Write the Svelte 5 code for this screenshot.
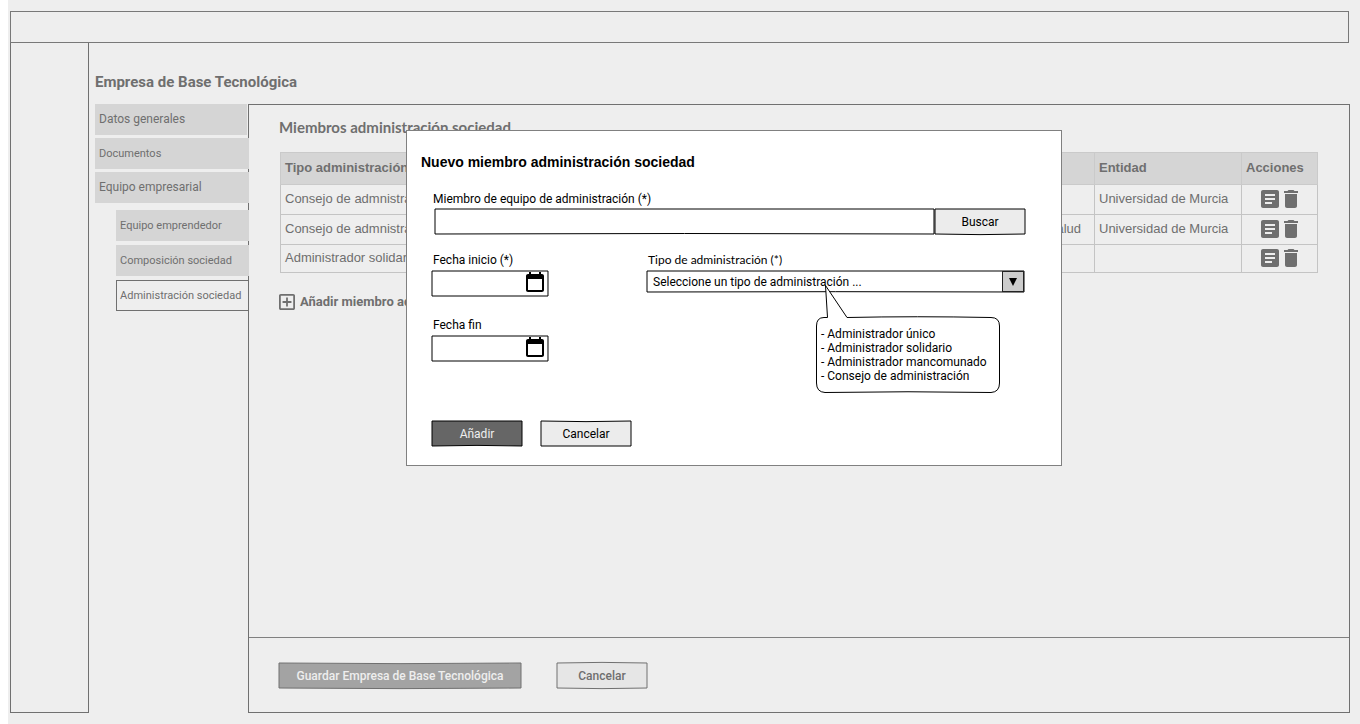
<script>
  const tabs = [
    { label: 'Datos generales', large: true, short: true },
    { label: 'Documentos' },
    { label: 'Equipo empresarial', large: true }
  ];
  const subtabs = [
    { label: 'Equipo emprendedor' },
    { label: 'Composición sociedad' },
    { label: 'Administración sociedad', active: true }
  ];
  const rows = [
    { type: 'Consejo de admnistración', area: '', entity: 'Universidad de Murcia' },
    { type: 'Consejo de admnistración', area: 'Salud', entity: 'Universidad de Murcia' },
    { type: 'Administrador solidario', area: '', entity: '' }
  ];
  const dates = [
    { id: 'start', label: 'Fecha inicio (*)' },
    { id: 'end', label: 'Fecha fin' }
  ];
  const kinds = [
    'Administrador único',
    'Administrador solidario',
    'Administrador mancomunado',
    'Consejo de administración'
  ];
</script>

{#snippet frame(top, bottom)}
  <svg class="frame" viewBox="0 0 100 100" preserveAspectRatio="none" aria-hidden="true">
    <path d="M0 0Q50 {top} 100 0V100Q50 {100 + bottom} 0 100Z" vector-effect="non-scaling-stroke" />
  </svg>
{/snippet}

<div class="page">
  <header></header>
  <div class="body">
    <aside></aside>
    <main>
      <h1>Empresa de Base Tecnológica</h1>
      <div class="workspace">
        <nav>
          {#each tabs as tab}
            <a href="#tab" class="tab" class:large={tab.large} class:short={tab.short}>{tab.label}</a>
          {/each}
          <div class="subtabs">
            {#each subtabs as tab}
              <a href="#subtab" class="tab" class:active={tab.active}>{tab.label}</a>
            {/each}
          </div>
        </nav>
        <section class="panel">
          <div class="content">
            <h2>Miembros administración sociedad</h2>
            <table>
              <colgroup><col class="c-type" /><col /><col class="c-entity" /><col class="c-actions" /></colgroup>
              <thead>
                <tr><th>Tipo administración</th><th></th><th>Entidad</th><th>Acciones</th></tr>
              </thead>
              <tbody>
                {#each rows as row}
                  <tr>
                    <td>{row.type}</td>
                    <td class="area">{row.area}</td>
                    <td>{row.entity}</td>
                    <td>
                      <div class="actions">
                        <button aria-label="Detalle">
                          <svg width="18" height="18" viewBox="3 3 18 18"><path d="M19 3H5c-1.1 0-2 .9-2 2v14c0 1.1.9 2 2 2h14c1.1 0 2-.9 2-2V5c0-1.1-.9-2-2-2zm-5 14H7v-2h7v2zm3-4H7v-2h10v2zm0-4H7V7h10v2z" /></svg>
                        </button>
                        <button aria-label="Eliminar">
                          <svg width="14" height="18" viewBox="5 3 14 18"><path d="M6 19c0 1.1.9 2 2 2h8c1.1 0 2-.9 2-2V7H6v12zM19 4h-3.5l-1-1h-5l-1 1H5v2h14V4z" /></svg>
                        </button>
                      </div>
                    </td>
                  </tr>
                {/each}
              </tbody>
            </table>
            <a href="#add" class="add">
              <svg width="16" height="16" viewBox="3 3 18 18"><path d="M19 3H5c-1.11 0-2 .9-2 2v14c0 1.1.89 2 2 2h14c1.1 0 2-.9 2-2V5c0-1.1-.9-2-2-2zm0 16H5V5h14v14zm-8-2h2v-4h4v-2h-4V7h-2v4H7v2h4z" /></svg>
              Añadir miembro ad
            </a>
          </div>
          <footer>
            <button class="btn save">{@render frame(5, 5)}<span>Guardar Empresa de Base Tecnológica</span></button>
            <button class="btn muted">{@render frame(-5, 5)}<span>Cancelar</span></button>
          </footer>
        </section>
      </div>
    </main>
  </div>

  <div class="modal" role="dialog" aria-labelledby="modal-title">
    <h3 id="modal-title">Nuevo miembro administración sociedad</h3>
    <form>
      <label for="member">Miembro de equipo de administración (*)</label>
      <div class="search">
        <div class="box">{@render frame(0, -4)}<input id="member" type="text" /></div>
        <button type="button" class="btn">{@render frame(0, 5)}<span>Buscar</span></button>
      </div>
      <div class="columns">
        <div class="dates">
          {#each dates as date}
            <div>
              <label for={date.id}>{date.label}</label>
              <div class="box date">
                {@render frame(0, 0)}
                <input id={date.id} type="text" />
                <button type="button" aria-label="Calendario">
                  <svg width="24" height="24" viewBox="0 0 24 24"><path d="M19 3h-1V1h-2v2H8V1H6v2H5c-1.11 0-1.99.9-1.99 2L3 19c0 1.1.89 2 2 2h14c1.1 0 2-.9 2-2V5c0-1.1-.9-2-2-2zm0 16H5V8h14v11z" /></svg>
                </button>
              </div>
            </div>
          {/each}
        </div>
        <div>
          <label for="kind" class="kind-label">Tipo de administración (*)</label>
          <div class="box kind">
            {@render frame(0, -3)}
            <select id="kind"><option>Seleccione un tipo de administración ...</option></select>
            <span class="arrow"><svg width="8" height="8" viewBox="0 0 8 8"><path d="M0 0h8L4 8z" /></svg></span>
            <div class="callout">
              <svg width="184" height="108" viewBox="0 0 184 108" aria-hidden="true">
                <path d="M8 33.5H11.5L9.5 1.5L31 33.5Q100 32 175 33.5Q183.5 33.5 183.5 42V99Q183.5 108 175 108.5Q92 107 9 108.5Q.5 108 .5 99V42Q.5 33.5 8 33.5Z" />
              </svg>
              <ul>
                {#each kinds as kind}<li>- {kind}</li>{/each}
              </ul>
            </div>
          </div>
        </div>
      </div>
      <div class="buttons">
        <button type="button" class="btn primary">{@render frame(0, -5)}<span>Añadir</span></button>
        <button type="button" class="btn">{@render frame(5, 0)}<span>Cancelar</span></button>
      </div>
    </form>
  </div>
</div>

<style>
  :global(body) { margin: 0; background: #fff; }
  * { box-sizing: border-box; }
  h1, h2, h3, ul { margin: 0; padding: 0; list-style: none; }
  a { color: inherit; text-decoration: none; }
  button, input, select { font: inherit; color: inherit; background: none; border: 0; padding: 0; margin: 0; }
  svg { display: block; fill: currentColor; }

  .page {
    position: relative;
    display: flex;
    flex-direction: column;
    min-height: 100vh;
    margin-left: 8px;
    padding: 11px 10px 11px 2px;
    background: #eee;
    color: #6f6f6f;
    font: 12px/16px Roboto, sans-serif;
  }
  header { height: 32px; margin-right: 1px; border: 1px solid #787878; }
  .body { flex: 1; display: grid; grid-template-columns: 79px 1fr; }
  aside { border: solid #707070; border-width: 0 1px 1px; }
  main { display: flex; flex-direction: column; padding: 29px 0 0 6px; }
  h1 { font-size: 15px; line-height: 20px; margin-bottom: 12px; }
  .workspace { flex: 1; display: grid; grid-template-columns: 154px 1fr; }

  nav, .subtabs { display: flex; flex-direction: column; gap: 4px; }
  nav { position: relative; z-index: 1; gap: 3px; }
  .subtabs { margin: 4px 0 0 21px; }
  .tab {
    height: 31px;
    padding: 0 4px;
    background: #d5d5d5;
    font-size: 11px;
    line-height: 31px;
    white-space: nowrap;
  }
  .large { font-size: 12px; }
  .short { margin-right: 2px; }
  .active { background: none; border: 1px solid #707070; padding: 0 3px; line-height: 29px; }

  .panel { display: flex; flex-direction: column; margin-left: -1px; border: 1px solid #707070; }
  .content { flex: 1; padding: 12px 31px 0; }
  h2 { margin: 0 0 15px -1px; font: bold 15px/20px Lato, sans-serif; }
  table {
    width: 100%;
    border-collapse: collapse;
    table-layout: fixed;
    font: 13px/16px "Liberation Sans", Arial, sans-serif;
  }
  .c-type { width: 160px; }
  .c-entity { width: 147px; }
  .c-actions { width: 76px; }
  th, td { height: 30px; padding: 0 4px 2px; border: 1px solid #c4c4c4; text-align: left; white-space: nowrap; }
  th { height: 32px; background: #d5d5d5; border-color: #cacaca; }
  tr:last-child td { height: 28px; }
  .area { text-align: right; padding-right: 13px; }
  .actions { display: flex; justify-content: center; gap: 5px; }
  .add { display: flex; align-items: center; gap: 5px; margin: 19px 0 0 -1px; font-weight: bold; font-size: 13px; line-height: 20px; }
  tr:first-child th { height: 32px; }
  footer { display: flex; gap: 36px; height: 75px; padding: 25px 30px; border-top: 1px solid #808080; }

  .btn { position: relative; width: 90px; height: 25px; color: #000; --fill: #ececec; --line: #000; }
  .btn span { position: relative; }
  .frame { position: absolute; inset: 0; width: 100%; height: 100%; overflow: visible; }
  .frame path { fill: var(--fill); stroke: var(--line); stroke-width: 1; }
  .primary { color: #eee; --fill: #666; }
  .muted { color: #6f6f6f; font-weight: 500; --fill: #e6e6e6; --line: #707070; }
  .save { width: 242px; color: #eee; font-weight: 500; --fill: #a3a3a3; --line: #707070; }

  .modal {
    position: absolute;
    top: 130px;
    left: 398px;
    right: 298px;
    z-index: 2;
    padding: 21px 36px 19px 25px;
    border: 1px solid #808080;
    background: #fff;
    color: #000;
  }
  h3 { margin: 0 0 19px -11px; font: bold 14px/20px "Liberation Sans", Arial, sans-serif; }
  label { display: block; padding-left: 1px; margin-bottom: 3px; }
  .box { position: relative; height: 25px; --fill: #fff; --line: #000; }
  .box input, select { position: relative; width: 100%; height: 100%; padding: 0 6px; outline: 0; appearance: none; }
  .search { display: grid; grid-template-columns: 1fr 90px; gap: 1px; margin: 2px 0 18px 3px; }
  form > label { margin-bottom: 0; }
  .columns { display: grid; grid-template-columns: 116px 377px; justify-content: space-between; padding-right: 1px; }
  .dates { display: grid; gap: 21px; }
  .date button { position: absolute; right: 1px; top: 0; }
  .kind-label { font-family: Lato, sans-serif; }
  .kind { height: 21px; }
  .arrow {
    position: absolute;
    inset: 0 0 0 auto;
    width: 22px;
    display: grid;
    place-items: center;
    border: 1px solid #222;
    background: #ccc;
    pointer-events: none;
  }
  .callout { position: absolute; left: 169px; top: 13px; width: 184px; }
  .callout path { fill: #fff; stroke: #000; }
  .callout svg { overflow: visible; }
  .callout ul { position: absolute; left: 5px; top: 43px; line-height: 14px; white-space: nowrap; }
  .buttons { display: flex; gap: 19px; margin-top: 60px; }
</style>
